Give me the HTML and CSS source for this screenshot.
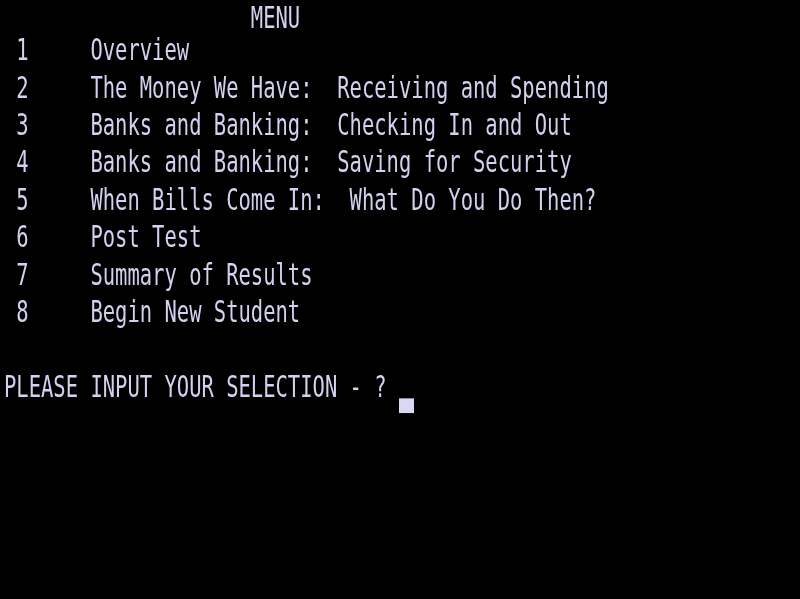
FILE: index.html
```html
<!DOCTYPE html>
<html lang="en">
<head>
  <meta charset="UTF-8">
  <title>MENU</title>
  <link rel="stylesheet" href="styles.css">
</head>
<body>
  <div class="screen">
    <div class="row title">                    MENU</div>
    <div class="row"> 1     Overview</div>
    <div class="row"> 2     The Money We Have:  Receiving and Spending</div>
    <div class="row"> 3     Banks and Banking:  Checking In and Out</div>
    <div class="row"> 4     Banks and Banking:  Saving for Security</div>
    <div class="row"> 5     When Bills Come In:  What Do You Do Then?</div>
    <div class="row"> 6     Post Test</div>
    <div class="row"> 7     Summary of Results</div>
    <div class="row"> 8     Begin New Student</div>
    <div class="row"> </div>
    <div class="row">PLEASE INPUT YOUR SELECTION - ? <span class="cursor"></span></div>
  </div>
</body>
</html>
```
FILE: styles.css
```css
html, body {
  margin: 0;
  height: 100%;
  background: #000;
  overflow: hidden;
}
/* 65 x 16 text screen, glyphs stretched tall like the old monitor */
.screen {
  padding: 0 0 0 4px;
  font-family: "DejaVu Sans Mono", monospace;
  font-size: 20.5px;
  color: #d2d2f0;
  transform: scaleY(1.47);
  transform-origin: 0 0;
  filter: blur(0.45px);
}
.row {
  white-space: pre;
  height: 25.37px;
  line-height: 19px;
}
/* top row sits flush with the screen edge */
.row.title {
  padding-top: 2.5px;
  height: 22.87px;
}
.cursor {
  display: inline-block;
  width: 15px;
  height: 9.5px;
  background: #d8d8f4;
  vertical-align: -11px;
}
```
